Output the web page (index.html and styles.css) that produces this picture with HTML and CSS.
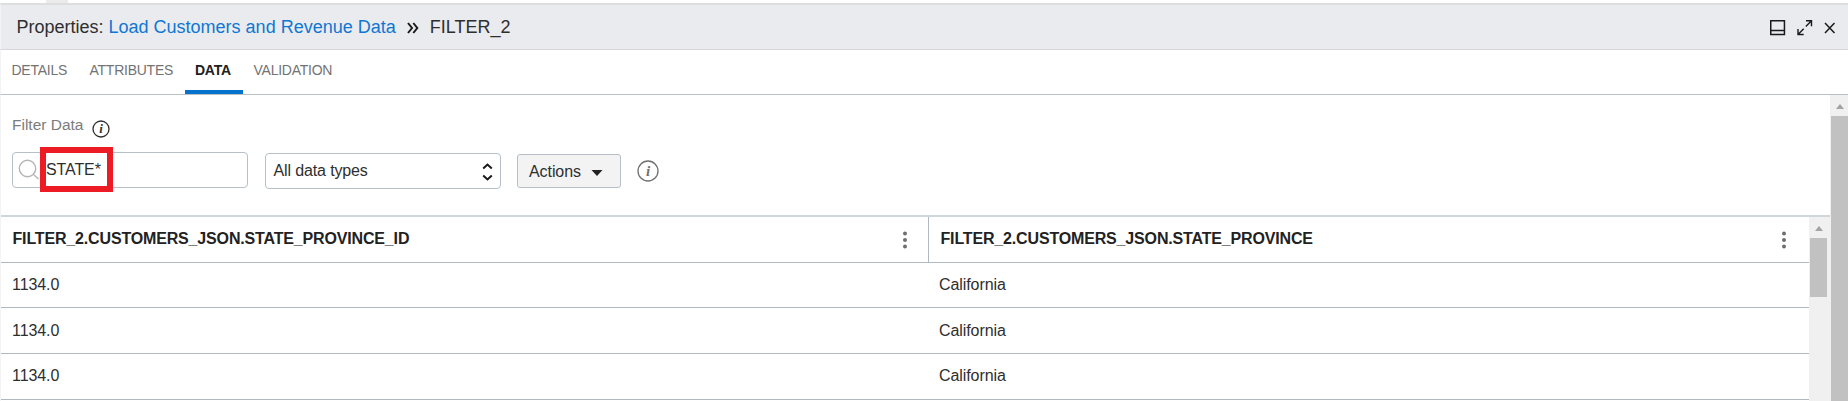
FILE: index.html
```html
<!DOCTYPE html>
<html lang="en">
<head>
<meta charset="utf-8">
<title>Properties</title>
<link rel="stylesheet" href="styles.css">
</head>
<body>
<div class="edge"><span class="edge-tab"></span></div>
<header class="title-bar">
  <div class="crumbs">
    <span class="crumb-label">Properties:&nbsp;</span><a class="crumb-link">Load Customers and Revenue Data</a>
    <svg class="chevrons" width="12" height="12" viewBox="0 0 12 12"><path d="M1 1l4 5-4 5M6.300 1l4 5-4 5"/></svg>
    <span>FILTER_2</span>
  </div>
  <div class="window-actions">
    <svg width="16" height="16" viewBox="0 0 16 16"><path d="M.75.75h13.700v13.700H.75zM.75 10.500h13.700"/></svg>
    <svg class="expand" width="16" height="16" viewBox="0 0 16 16"><path d="M9 .8h5.500v5.500M14.500.8L8.800 6.500M6.700 14.500H1V9M1 14.500l5.700-5.700"/></svg>
    <svg width="12" height="12" viewBox="0 0 12 12"><path d="M1 1l9.500 10M10.500 1L1 11"/></svg>
  </div>
</header>
<nav class="tabs">
  <a class="tab details">DETAILS</a>
  <a class="tab attributes">ATTRIBUTES</a>
  <a class="tab active">DATA</a>
  <a class="tab validation">VALIDATION</a>
</nav>
<div class="body">
  <main class="panel">
    <section class="filters">
      <div class="filter-label">
        <label>Filter Data</label>
        <svg class="info small" width="18" height="18" viewBox="0 0 18 18"><circle cx="9" cy="9" r="8"/><text x="9" y="13">i</text></svg>
      </div>
      <div class="controls">
        <div class="search">
          <svg class="magnifier" width="22" height="22" viewBox="0 0 22 22"><circle cx="9.500" cy="9.500" r="8.200"/><path d="M15.300 15.300l5.200 4.700"/></svg>
          <span class="search-text">STATE*</span>
          <span class="highlight"></span>
        </div>
        <div class="select">
          <span>All data types</span>
          <svg width="11" height="18" viewBox="0 0 11 18"><path d="M1.200 5.500l4.300-4 4.300 4M1.200 12.500l4.300 4 4.300-4"/></svg>
        </div>
        <div class="button">
          <span>Actions</span>
          <svg width="12" height="6" viewBox="0 0 12 6"><path d="M.5 0h11L6 6z"/></svg>
        </div>
        <svg class="info large" width="22" height="22" viewBox="0 0 22 22"><circle cx="11" cy="11" r="10"/><text x="11" y="15.500">i</text></svg>
      </div>
    </section>
    <section class="table-wrap">
      <div class="table">
        <div class="row head">
          <div class="cell"><span>FILTER_2.CUSTOMERS_JSON.STATE_PROVINCE_ID</span>
            <svg class="more" width="4" height="18" viewBox="0 0 4 18"><circle cx="2" cy="2.500" r="2"/><circle cx="2" cy="9" r="2"/><circle cx="2" cy="15.500" r="2"/></svg></div>
          <div class="cell"><span>FILTER_2.CUSTOMERS_JSON.STATE_PROVINCE</span>
            <svg class="more" width="4" height="18" viewBox="0 0 4 18"><circle cx="2" cy="2.500" r="2"/><circle cx="2" cy="9" r="2"/><circle cx="2" cy="15.500" r="2"/></svg></div>
        </div>
        <div class="row first"><div class="cell">1134.0</div><div class="cell">California</div></div>
        <div class="row"><div class="cell">1134.0</div><div class="cell">California</div></div>
        <div class="row last"><div class="cell">1134.0</div><div class="cell">California</div></div>
      </div>
      <div class="scrollbar inner">
        <svg class="arrow" width="8" height="5" viewBox="0 0 8 5"><path d="M0 5L4 0l4 5z"/></svg>
        <div class="thumb"></div>
      </div>
    </section>
  </main>
  <div class="scrollbar outer">
    <svg class="arrow" width="8" height="5" viewBox="0 0 8 5"><path d="M0 5L4 0l4 5z"/></svg>
    <div class="thumb"></div>
  </div>
</div>
</body>
</html>
```

FILE: styles.css
```css
* { box-sizing: border-box; }
body {
  margin: 0;
  width: 1848px;
  height: 401px;
  overflow: hidden;
  background: #fff;
  color: #2e2e2e;
  font-family: "Liberation Sans", Arial, sans-serif;
  font-size: 16px;
  line-height: 18px;
  letter-spacing: -0.08px;
}
svg { display: block; flex: none; fill: none; stroke: #1a1a1a; overflow: visible; }
span, a, label { white-space: nowrap; }

.edge { height: 3px; padding-left: 46px; }
.edge-tab { display: block; width: 22px; height: 3px; background: #ebebeb; }

.title-bar {
  display: flex;
  justify-content: space-between;
  height: 47px;
  padding: 0 12.5px 0 15.5px;
  background: #eaebef;
  border-top: 2px solid #dedede;
  border-bottom: 1px solid #d5d6da;
  border-left: 1px solid #f3f3f5;
}
.crumbs { display: flex; align-items: center; height: 44px; font-size: 18px; line-height: 20px; letter-spacing: 0; }
.crumb-link { color: #0f77d2; }
.chevrons { margin: 2px 11px 0 11px; stroke-width: 2; }
.window-actions { display: flex; align-items: center; height: 46px; }
.window-actions svg { stroke-width: 1.5; }
.window-actions .expand { margin: 0 11px; stroke-width: 1.4; }

.tabs {
  display: flex;
  height: 45px;
  border-bottom: 1px solid #b7c0c8;
  border-left: 1px solid #f3f3f5;
  font-size: 14px;
  letter-spacing: -0.25px;
}
.tab { height: 44px; padding-top: 11px; color: #737373; }
.details { width: 78px; padding-left: 10.5px; }
.attributes { width: 105.5px; padding-left: 10.5px; }
.active { width: 58px; padding-left: 10.5px; color: #202020; font-weight: bold; border-bottom: 4px solid #0572ce; }
.validation { padding-left: 11px; }

.body { display: flex; height: 306px; }
.panel { width: 1830px; border-left: 1px solid #f3f3f5; }
.filters { height: 122px; padding: 20px 0 0 11px; border-bottom: 2px solid #d0d7db; }
.filter-label { display: flex; height: 37px; color: #7c7c7c; font-size: 15.5px; letter-spacing: 0; }
.filter-label label { padding-top: 1px; }
.small { margin: 5px 0 0 8px; }
.info circle { stroke: #707070; stroke-width: 1.3; }
.small circle { stroke: #2e2e2e; }
.info text { fill: #333; stroke: none; text-anchor: middle; font: italic bold 13px "Liberation Serif", serif; }
.large text { fill: #707070; font-size: 15px; }

.controls { display: flex; }
.search, .select { width: 236px; height: 36px; border: 1px solid #b7c0c8; border-radius: 4px; display: flex; }
.search { position: relative; padding: 6px 0 0 5px; }
.magnifier { stroke: #b5b5b5; stroke-width: 1.4; }
.search-text { margin-left: 6px; padding-top: 2px; letter-spacing: -0.1px; }
.highlight { position: absolute; left: 27px; top: -6px; width: 73px; height: 45px; border: 6px solid #ed1c24; }
.select { margin: 1px 0 0 16.5px; padding: 8px 7px 0 8px; justify-content: space-between; letter-spacing: -0.13px; }
.select svg { stroke-width: 2; margin-top: 1px; }
.button {
  display: flex;
  width: 104px;
  height: 34px;
  margin: 2px 0 0 16.5px;
  padding: 8px 0 0 11px;
  background: #f3f3f4;
  border: 1px solid #b7c0c8;
  border-radius: 3px;
}
.button svg { margin: 7px 0 0 10.5px; fill: #222; stroke: none; }
.large { margin: 8px 0 0 15.5px; }

.table-wrap { display: flex; height: 184px; }
.table { width: 1808px; }
.row { display: flex; height: 46px; border-bottom: 1px solid #b0b9c1; }
.row .cell { padding: 14px 0 0 11px; }
.cell:first-child { width: 927px; }
.cell:last-child { flex: 1; }
.first { height: 45px; }
.row.first .cell { padding-top: 13px; }
.row.last .cell { padding-top: 13px; }
.head { color: #222; font-weight: bold; letter-spacing: -0.16px; }
.row.head .cell { display: flex; justify-content: space-between; padding: 13px 21.500px 0 11.500px; }
.row.head .cell:last-child { padding-right: 23px; border-left: 1px solid #b0b9c1; }
.more { fill: #6f6f6f; stroke: none; margin-top: 1px; }

.scrollbar { display: flex; flex-direction: column; background: #f0f0f0; }
.scrollbar .thumb { background: #c1c1c1; }
.arrow { fill: #a3a3a3; stroke: none; }
.inner { width: 21px; }
.inner .arrow { margin: 9px 0 7px 6px; }
.inner .thumb { width: 17px; height: 59px; margin-left: 1px; }
.outer { width: 18px; }
.outer .arrow { margin: 9px 0 7px 6px; }
.outer .thumb { flex: 1; margin-left: 1px; }
```
